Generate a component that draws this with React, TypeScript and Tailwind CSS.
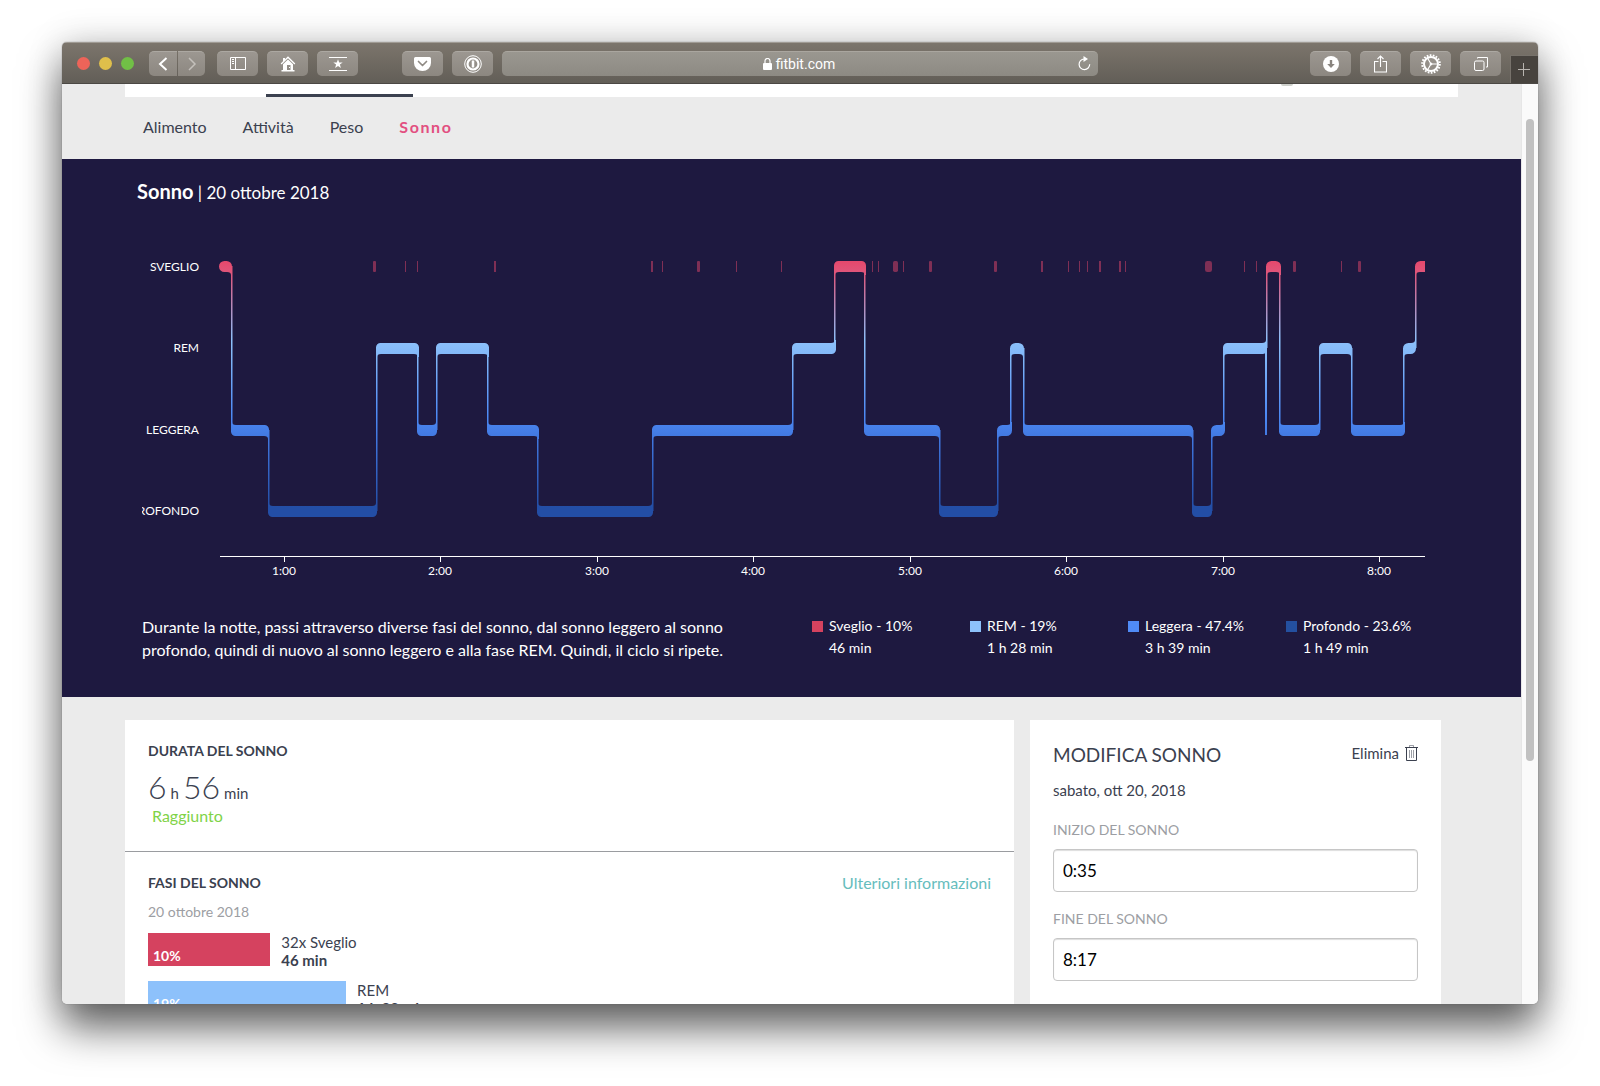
import { useId } from "react";

// ── Data ──────────────────────────────────────────────────────────────────────

type Stage = "wake" | "rem" | "light" | "deep";

interface Segment {
  stage: Stage;
  from: number;
  to: number;
}

// Top edge of each stage's band inside the chart
const BAND_TOP: Record<Stage, number> = { wake: 21, rem: 103, light: 185, deep: 266 };
const BAND_HEIGHT = 11;
const LINE = 2;

const SEGMENTS: Segment[] = [
  { stage: "wake", from: 82, to: 95 },
  { stage: "light", from: 94, to: 132 },
  { stage: "deep", from: 131, to: 240 },
  { stage: "rem", from: 239, to: 282 },
  { stage: "light", from: 280, to: 300 },
  { stage: "rem", from: 299, to: 352 },
  { stage: "light", from: 350, to: 402 },
  { stage: "deep", from: 400, to: 516 },
  { stage: "light", from: 515, to: 656 },
  { stage: "rem", from: 655, to: 699 },
  { stage: "wake", from: 697, to: 729 },
  { stage: "light", from: 727, to: 803 },
  { stage: "deep", from: 802, to: 861 },
  { stage: "light", from: 860, to: 875 },
  { stage: "rem", from: 873, to: 887 },
  { stage: "light", from: 886, to: 1056 },
  { stage: "deep", from: 1055, to: 1075 },
  { stage: "light", from: 1074, to: 1088 },
  { stage: "rem", from: 1086, to: 1130 },
  { stage: "wake", from: 1129, to: 1144 },
  { stage: "light", from: 1142, to: 1183 },
  { stage: "rem", from: 1182, to: 1215 },
  { stage: "light", from: 1214, to: 1268 },
  { stage: "rem", from: 1266, to: 1279 },
  { stage: "wake", from: 1278, to: 1288 },
];

// Short awakenings: [x, width]
const AWAKENINGS: [number, number][] = [
  [236, 3], [268, 1], [280, 1], [357, 2], [514, 2], [525, 1], [560, 3], [599, 1], [644, 1],
  [735, 1], [741, 1], [756, 5], [766, 1], [792, 3], [857, 3], [904, 2], [931, 1], [942, 1],
  [950, 1], [962, 2], [982, 2], [988, 1], [1068, 7], [1107, 1], [1119, 1], [1156, 3], [1204, 1],
  [1221, 3],
];

const BAND_LABELS: { label: string; y: number }[] = [
  { label: "SVEGLIO", y: 31 },
  { label: "REM", y: 112 },
  { label: "LEGGERA", y: 194 },
  { label: "PROFONDO", y: 275 },
];

const HOURS = [
  { label: "1:00", x: 147 },
  { label: "2:00", x: 303 },
  { label: "3:00", x: 460 },
  { label: "4:00", x: 616 },
  { label: "5:00", x: 773 },
  { label: "6:00", x: 929 },
  { label: "7:00", x: 1086 },
  { label: "8:00", x: 1242 },
];

const LEGEND = [
  { label: "Sveglio - 10%", time: "46 min", color: "bg-[#d5425f]" },
  { label: "REM - 19%", time: "1 h 28 min", color: "bg-[#8dc1fb]" },
  { label: "Leggera - 47.4%", time: "3 h 39 min", color: "bg-[#508bf7]" },
  { label: "Profondo - 23.6%", time: "1 h 49 min", color: "bg-[#2450a0]" },
];

const PHASES = [
  { percent: "10%", label: "32x Sveglio", time: "46 min", width: 14.5, color: "bg-[#d5425f]" },
  { percent: "19%", label: "REM", time: "1 h 28 min", width: 23.5, color: "bg-[#8dc1fb]" },
];

// ── Chart ─────────────────────────────────────────────────────────────────────

function bandPath(seg: Segment, prev?: Segment, next?: Segment) {
  const top = BAND_TOP[seg.stage];
  const bottom = top + BAND_HEIGHT;
  const r = seg.to - seg.from < 16 ? 5.5 : 4.5;
  const up = (s?: Segment) => !!s && BAND_TOP[s.stage] < top;
  const down = (s?: Segment) => !!s && BAND_TOP[s.stage] > top;

  const tl = up(prev) ? 0 : r;
  const bl = down(prev) ? 0 : r;
  const tr = up(next) || !next ? 0 : r;
  const br = down(next) || !next ? 0 : r;

  let d =
    `M${seg.from + tl} ${top}H${seg.to - tr}a${tr} ${tr} 0 0 1 ${tr} ${tr}V${bottom - br}` +
    `a${br} ${br} 0 0 1 ${-br} ${br}H${seg.from + bl}a${bl} ${bl} 0 0 1 ${-bl} ${-bl}` +
    `V${top + tl}a${tl} ${tl} 0 0 1 ${tl} ${-tl}Z`;

  // Fillets where the band runs into a connecting line
  if (prev) {
    const y = up(prev) ? top : bottom;
    const dy = up(prev) ? -3 : 3;
    d += `M${seg.from} ${y}v${dy}h1q0 ${-dy} 4 ${-dy}Z`;
  }
  if (next) {
    const y = up(next) ? top : bottom;
    const dy = up(next) ? -3 : 3;
    d += `M${seg.to} ${y}v${dy}h-1q0 ${-dy} -4 ${-dy}Z`;
  }
  return d;
}

function Hypnogram() {
  const gradient = useId();

  return (
    <svg viewBox="0 0 1321 340" className="block w-full" role="img" aria-label="Fasi del sonno">
      <defs>
        <linearGradient id={gradient} gradientUnits="userSpaceOnUse" x1="0" y1="21" x2="0" y2="277">
          <stop offset="0" stopColor="#e5486c" />
          <stop offset="0.06" stopColor="#dd5a80" />
          <stop offset="0.31" stopColor="#8dc1fb" />
          <stop offset="0.38" stopColor="#80b6f8" />
          <stop offset="0.6" stopColor="#4d8af5" />
          <stop offset="0.7" stopColor="#4076de" />
          <stop offset="0.96" stopColor="#234ea6" />
        </linearGradient>
      </defs>

      <g fill="#fff" className="text-[12px]">
        {BAND_LABELS.map((b) => (
          <text key={b.label} x="62" y={b.y} textAnchor="end">
            {b.label}
          </text>
        ))}
      </g>
      {/* Labels are cut at the chart's left edge */}
      <rect x="-10" y="260" width="15" height="24" fill="#1e1940" />

      <g fill="#7f2f55">
        {AWAKENINGS.map(([x, w]) => (
          <rect key={x} x={x} y="21" width={w} height="11" rx={w > 2 ? w / 3 : 0} />
        ))}
      </g>

      <g fill={`url(#${gradient})`}>
        {SEGMENTS.map((seg, i) => (
          <path key={seg.from} d={bandPath(seg, SEGMENTS[i - 1], SEGMENTS[i + 1])} />
        ))}
        {SEGMENTS.slice(1).map((seg, i) => {
          const a = BAND_TOP[SEGMENTS[i].stage] + 5;
          const b = BAND_TOP[seg.stage] + 5;
          return (
            <rect
              key={seg.from}
              x={seg.from}
              y={Math.min(a, b)}
              width={LINE - 0.5}
              height={Math.abs(a - b)}
            />
          );
        })}
        <rect x="1128" y="108" width="2" height="87" />
      </g>

      <path d="M83 316.500H1288" stroke="#fff" />
      <g fill="#fff" textAnchor="middle" className="text-[12px]">
        {HOURS.map((h) => (
          <g key={h.label}>
            <rect x={h.x} y="317" width="1" height="5" />
            <text x={h.x} y="335">
              {h.label}
            </text>
          </g>
        ))}
      </g>
    </svg>
  );
}

// ── Browser toolbar ───────────────────────────────────────────────────────────

function ToolButton({
  label,
  className = "w-[41px] rounded-[5px]",
  children,
}: {
  label: string;
  className?: string;
  children: React.ReactNode;
}) {
  return (
    <button
      type="button"
      aria-label={label}
      className={`flex h-[25px] shrink-0 items-center justify-center border-t border-[#aca8a2] bg-linear-to-b from-[#9c9791] to-[#8c8780] text-white ${className}`}
    >
      {children}
    </button>
  );
}

function Toolbar() {
  return (
    <header className="flex h-[42px] shrink-0 items-center border-t border-b border-t-[#a09b94] border-b-[#4b4844] bg-linear-to-b from-[#7c756c] to-[#625e57] pl-[15px]">
      <div className="flex gap-[9px]">
        <span className="size-[13px] rounded-full bg-[#ed6459]" />
        <span className="size-[13px] rounded-full bg-[#dfbf4b]" />
        <span className="size-[13px] rounded-full bg-[#71bf46]" />
      </div>

      <div className="ml-[15px] flex gap-px">
        <ToolButton label="Indietro" className="w-7 rounded-l-[5px]">
          <svg width="10" height="16" viewBox="0 0 10 16" fill="none" stroke="currentColor" strokeWidth="2">
            <path d="M8.500 2 2 8l6.500 6" />
          </svg>
        </ToolButton>
        <ToolButton label="Avanti" className="w-[27px] rounded-r-[5px]">
          <svg width="10" height="16" viewBox="0 0 10 16" fill="none" stroke="#c4c0bb" strokeWidth="1.500">
            <path d="M2 2l6 6-6 6" />
          </svg>
        </ToolButton>
      </div>

      <div className="ml-3 flex gap-[9px]">
        <ToolButton label="Barra laterale">
          <svg width="16" height="13" viewBox="0 0 16 13" fill="none" stroke="currentColor">
            <path d="M.5.500h15v12H.5zM5.500.500v12M2 2.500h2M2 4.500h2M2 6.500h2" />
          </svg>
        </ToolButton>
        <ToolButton label="Pagina iniziale">
          <svg width="16" height="16" viewBox="0 0 16 16" fill="currentColor">
            <path d="M8 .3 15.300 7.500l-.9.900L8 2.200 1.600 8.400l-.9-.9L3 5.200V2h2v1.300z" />
            <path d="M8 3.500 3 8.300V14H1.500v1.500h13V14H13V8.300zM7 14V9h3.500v5z" fillRule="evenodd" />
            <path d="M9 11h1v1H9z" />
          </svg>
        </ToolButton>
        <ToolButton label="Siti principali">
          <svg width="18" height="14" viewBox="0 0 18 14" fill="currentColor">
            <path d="M0 0h18v1H0zM0 13h18v1H0zM9 2.200l1.200 3.300h3.500l-2.800 2.100 1 3.400L9 9l-2.900 2 1-3.400-2.800-2.100h3.500z" />
          </svg>
        </ToolButton>
      </div>

      <div className="ml-11 flex gap-[9px]">
        <ToolButton label="Pocket">
          <svg width="17" height="14" viewBox="0 0 17 14">
            <path d="M1.500 0h14A1.500 1.500 0 0 1 17 1.500V6A8.500 8 0 0 1 0 6V1.500A1.500 1.500 0 0 1 1.500 0Z" fill="currentColor" />
            <path d="m4.500 4.500 4 4 4-4" fill="none" stroke="#8f8a84" strokeWidth="1.700" strokeLinecap="round" strokeLinejoin="round" />
          </svg>
        </ToolButton>
        <ToolButton label="Password">
          <svg width="18" height="18" viewBox="0 0 18 18" fill="none" stroke="currentColor">
            <circle cx="9" cy="9" r="8.300" strokeWidth="1" />
            <circle cx="9" cy="9" r="5.500" strokeWidth="2.200" />
            <path d="M9 5.500v7" strokeWidth="2.500" />
          </svg>
        </ToolButton>
      </div>

      <div className="ml-[9px] flex h-[25px] flex-1 items-center rounded-[5px] border-t border-[#aaa69f] bg-linear-to-b from-[#9a9790] to-[#8d8a83] pr-[7px] pl-[18px] text-white">
        <div className="flex flex-1 items-center justify-center gap-1">
          <svg width="9" height="12" viewBox="0 0 9 12" fill="currentColor">
            <rect y="5" width="9" height="7" rx="1" />
            <path d="M2 5.500V3a2.500 2.500 0 0 1 5 0v2.500" fill="none" stroke="currentColor" strokeWidth="1.200" />
          </svg>
          <span className="font-[Roboto] text-sm">fitbit.com</span>
        </div>
        <button type="button" aria-label="Ricarica">
          <svg width="13" height="15" viewBox="0 0 13 15" fill="none" stroke="currentColor" strokeWidth="1.200">
            <path d="M7 3H6.200a5.300 5.300 0 1 0 5.500 5.300" />
            <path d="M5.500 0 10 3 5.500 6z" fill="currentColor" stroke="none" />
          </svg>
        </button>
      </div>

      <div className="mr-[9px] ml-[212px] flex gap-[9px]">
        <ToolButton label="Download">
          <svg width="16" height="16" viewBox="0 0 16 16">
            <circle cx="8" cy="8" r="8" fill="currentColor" />
            <path d="M6.800 4h2.400v4h2.600L8 12 4.200 8h2.600z" fill="#8a857f" />
          </svg>
        </ToolButton>
        <ToolButton label="Condividi">
          <svg width="13" height="18" viewBox="0 0 13 18" fill="none" stroke="currentColor" strokeWidth="1.100">
            <path d="M4.500 6.500h-4v10.500h12V6.500h-4M6.500 12V1M3.500 4l3-3 3 3" />
          </svg>
        </ToolButton>
        <ToolButton label="Impostazioni">
          <svg width="20" height="20" viewBox="0 0 20 20" fill="none" stroke="currentColor">
            <circle cx="10" cy="10" r="7" strokeWidth="2" />
            <circle cx="10" cy="10" r="8.800" strokeWidth="2" strokeDasharray="1.700 1.371" />
            <path d="M10 10h7M10 10 6.500 4M10 10l-3.500 6" strokeWidth="1.200" />
            <circle cx="10" cy="10" r="1" fill="currentColor" />
          </svg>
        </ToolButton>
        <ToolButton label="Pannelli">
          <svg width="14" height="14" viewBox="0 0 14 14" fill="none" stroke="currentColor">
            <rect x=".5" y="4" width="9.500" height="9.500" rx="1.500" />
            <path d="M3.500 1.500V.5h10v9.500H12" />
          </svg>
        </ToolButton>
      </div>

      <button
        type="button"
        aria-label="Nuovo pannello"
        className="flex size-7 shrink-0 items-center justify-center self-end border-t border-l border-[#77726b] bg-[#47433e]"
      >
        <svg width="13" height="13" viewBox="0 0 13 13" stroke="#b8b4af">
          <path d="M5.500 0v13M0 6.500h12" />
        </svg>
      </button>
    </header>
  );
}

// ── Page sections ─────────────────────────────────────────────────────────────

function SubNav() {
  return (
    <div className="px-[63px]">
      <div className="flex h-[13px] items-end bg-white pl-[141px]">
        <div className="h-[3px] w-[147px] bg-[#3b414f]" />
        <div className="mr-[165px] ml-auto h-[2px] w-3 self-start rounded-b-full bg-[#cfd1cc]" />
      </div>
      <nav className="flex h-[62px] items-center gap-9 pb-[2px] pl-[18px] text-base text-[#3b414f]">
        <a href="#alimento">Alimento</a>
        <a href="#attivita">Attività</a>
        <a href="#peso">Peso</a>
        <a href="#sonno" className="font-bold tracking-widest text-[#e24f80]">
          Sonno
        </a>
      </nav>
    </div>
  );
}

function SleepChart() {
  return (
    <section className="bg-[#1e1940] px-[75px] pt-5 pb-9 text-white">
      <h1 className="text-[17px] leading-6">
        <strong className="text-xl leading-6">Sonno</strong> | 20 ottobre 2018
      </h1>
      <div className="mt-[35px] -mr-[75px] pr-[63px]">
        <Hypnogram />
      </div>
      <div className="mt-[35px] flex items-start justify-between pl-[5px]">
        <p className="w-[590px] text-base leading-[23px]">
          Durante la notte, passi attraverso diverse fasi del sonno, dal sonno leggero al sonno profondo, quindi di
          nuovo al sonno leggero e alla fase REM. Quindi, il ciclo si ripete.
        </p>
        <ul className="mr-[2px] grid w-[632px] grid-cols-4 text-sm leading-[22px]">
          {LEGEND.map((item) => (
            <li key={item.label} className="flex gap-[6px] whitespace-nowrap">
              <span className={`mt-[6px] size-[11px] shrink-0 ${item.color}`} />
              <div>
                <div>{item.label}</div>
                <div>{item.time}</div>
              </div>
            </li>
          ))}
        </ul>
      </div>
    </section>
  );
}

function SummaryCard() {
  return (
    <section className="bg-white">
      <div className="border-b border-[#9a9ca0] px-[23px] pt-[21px] pb-6">
        <h2 className="text-sm leading-5 font-bold">DURATA DEL SONNO</h2>
        <p className="mt-2 flex h-9 items-baseline gap-1 text-[15px] leading-9">
          <span className="text-[32px] font-light">6</span> h
          <span className="text-[32px] font-light">56</span> min
        </p>
        <p className="pl-1 text-base leading-[22px] text-[#7fd348]">Raggiunto</p>
      </div>

      <div className="px-[23px] pt-[21px]">
        <div className="flex justify-between">
          <h2 className="text-sm leading-5 font-bold">FASI DEL SONNO</h2>
          <a href="#info" className="text-base leading-5 text-[#66bdbd]">
            Ulteriori informazioni
          </a>
        </div>
        <p className="mt-[9px] text-sm leading-5 text-[#9c9ea3]">20 ottobre 2018</p>
        {PHASES.map((p) => (
          <div key={p.label} className="mt-[11px] flex h-[37px] gap-[11px]">
            <div
              className={`flex h-[33px] items-end pl-[5px] text-sm font-bold text-white ${p.color}`}
              style={{ width: `${p.width}%` }}
            >
              {p.percent}
            </div>
            <div className="text-[15px] leading-[18px]">
              <div>{p.label}</div>
              <div className="font-bold">{p.time}</div>
            </div>
          </div>
        ))}
      </div>
    </section>
  );
}

function TimeField({ id, label, value }: { id: string; label: string; value: string }) {
  return (
    <div className="mt-[17px]">
      <label htmlFor={id} className="block text-sm leading-5 text-[#9c9ea3]">
        {label}
      </label>
      <input
        id={id}
        type="text"
        defaultValue={value}
        className="mt-[9px] h-[43px] w-full rounded-[4px] border border-[#c6c6c6] bg-white px-[9px] text-[17px] text-black shadow-[inset_0_1px_1px_#ddd]"
      />
    </div>
  );
}

function EditCard() {
  return (
    <form className="bg-white px-[23px] pt-[22px]">
      <div className="flex items-start justify-between">
        <h2 className="text-[19px] leading-[26px]">MODIFICA SONNO</h2>
        <button type="button" className="flex items-center gap-[6px] text-[15px] leading-[22px]">
          Elimina
          <svg width="13" height="16" viewBox="0 0 13 16" fill="none" stroke="currentColor">
            <path d="M0 2.500h13M1.500 2.500v13h10v-13" />
            <path d="M4.500 2.500v-2h4v2M4.500 5v8M6.500 5v8M8.500 5v8" strokeOpacity=".5" />
          </svg>
        </button>
      </div>
      <p className="mt-3 text-[15px] leading-5">sabato, ott 20, 2018</p>
      <div className="pt-[3px]">
        <TimeField id="inizio" label="INIZIO DEL SONNO" value="0:35" />
        <TimeField id="fine" label="FINE DEL SONNO" value="8:17" />
      </div>
    </form>
  );
}

// ── App ───────────────────────────────────────────────────────────────────────

export default function App() {
  return (
    <div className="flex h-screen bg-white px-[62px] pt-[42px] pb-[82px] font-[Lato,sans-serif] text-[#3b414f]">
      <div className="flex min-w-0 flex-1 flex-col overflow-hidden rounded-[5px] shadow-[0_0_1px_#555,0_0_36px_rgba(0,0,0,.16),0_24px_42px_rgba(0,0,0,.6)]">
        <Toolbar />
        <div className="flex min-h-0 flex-1">
          <main className="min-w-0 flex-1 overflow-hidden bg-[#ebebeb]">
            <SubNav />
            <SleepChart />
            <div className="grid h-full grid-cols-[889fr_411fr] gap-4 pt-[23px] pr-20 pl-[63px]">
              <SummaryCard />
              <EditCard />
            </div>
          </main>
          <div className="w-[17px] shrink-0 border-l border-[#e6e6e6] bg-[#fafafa] px-1 pt-[35px]">
            <div className="h-[642px] w-2 rounded-full bg-[#c1c1c1]" />
          </div>
        </div>
      </div>
    </div>
  );
}
